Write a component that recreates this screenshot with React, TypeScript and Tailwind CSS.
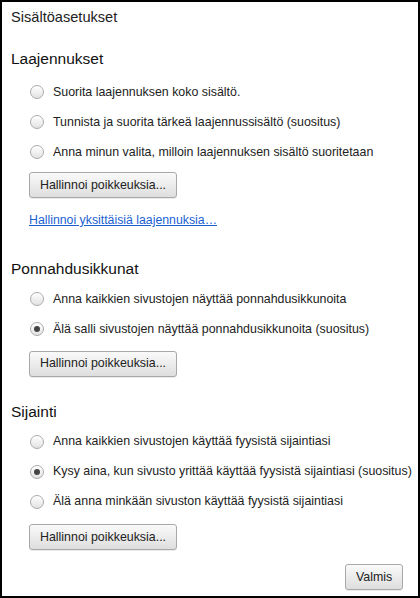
import React from 'react';

const Radio = ({ label, checked = false }: { label: string; checked?: boolean }) => (
  <div className="h-[30px] flex items-center ml-[19px]">
    <span className="w-[14px] h-[14px] shrink-0 rounded-full border border-[#aaaaaa] bg-gradient-to-b from-[#ffffff] to-[#e2e2e2] flex items-center justify-center shadow-[inset_0_1px_1px_rgba(255,255,255,0.8)]">
      {checked && <span className="w-[6px] h-[6px] rounded-full bg-[#444444]" />}
    </span>
    <span className="ml-[9px] text-[12.4px] text-[#222222] whitespace-nowrap">{label}</span>
  </div>
);

const ManageButton = ({ label, className = '' }: { label: string; className?: string }) => (
  <button
    className={`h-[26px] px-[10px] rounded-[3px] border border-[#a8a8a8] bg-gradient-to-b from-[#fafafa] to-[#dedede] text-[12.4px] text-[#222222] shadow-[0_1px_0_rgba(0,0,0,0.08)] ${className}`}
  >
    {label}
  </button>
);

const App = () => {
  return (
    <div
      className="w-[420px] h-[598px] border-2 border-black bg-white px-[9px] flex flex-col"
      style={{ fontFamily: '"Liberation Sans", Arial, sans-serif' }}
    >
      <div className="h-[32px] flex items-center text-[14.6px] text-[#222222]">Sisältöasetukset</div>

      {/* Laajennukset */}
      <div className="mt-[13px] h-[24px] flex items-center text-[15.5px] text-[#111111]">Laajennukset</div>
      <div className="mt-[6px]">
        <Radio label="Suorita laajennuksen koko sisältö." />
        <Radio label="Tunnista ja suorita tärkeä laajennussisältö (suositus)" />
        <Radio label="Anna minun valita, milloin laajennuksen sisältö suoritetaan" />
      </div>
      <div className="mt-[5px] ml-[18px]">
        <ManageButton label="Hallinnoi poikkeuksia..." />
      </div>
      <div className="mt-[14px] ml-[18px] h-[16px] flex items-center">
        <a href="#" className="text-[12.3px] text-[#1a5fd1] underline">
          Hallinnoi yksittäisiä laajennuksia…
        </a>
      </div>

      {/* Ponnahdusikkunat */}
      <div className="mt-[28px] h-[24px] flex items-center text-[15.5px] text-[#111111]">Ponnahdusikkunat</div>
      <div className="mt-[4px]">
        <Radio label="Anna kaikkien sivustojen näyttää ponnahdusikkunoita" />
        <Radio label="Älä salli sivustojen näyttää ponnahdusikkunoita (suositus)" checked />
      </div>
      <div className="mt-[6px] ml-[18px]">
        <ManageButton label="Hallinnoi poikkeuksia..." />
      </div>

      {/* Sijainti */}
      <div className="mt-[23px] h-[24px] flex items-center text-[15.5px] text-[#111111]">Sijainti</div>
      <div className="mt-[3px]">
        <Radio label="Anna kaikkien sivustojen käyttää fyysistä sijaintiasi" />
        <Radio label="Kysy aina, kun sivusto yrittää käyttää fyysistä sijaintiasi (suositus)" checked />
        <Radio label="Älä anna minkään sivuston käyttää fyysistä sijaintiasi" />
      </div>
      <div className="mt-[7px] ml-[18px]">
        <ManageButton label="Hallinnoi poikkeuksia..." />
      </div>

      <div className="mt-[14px] flex justify-end mr-[6px]">
        <ManageButton label="Valmis" className="w-[58px] px-0" />
      </div>
    </div>
  );
};

export default App;
